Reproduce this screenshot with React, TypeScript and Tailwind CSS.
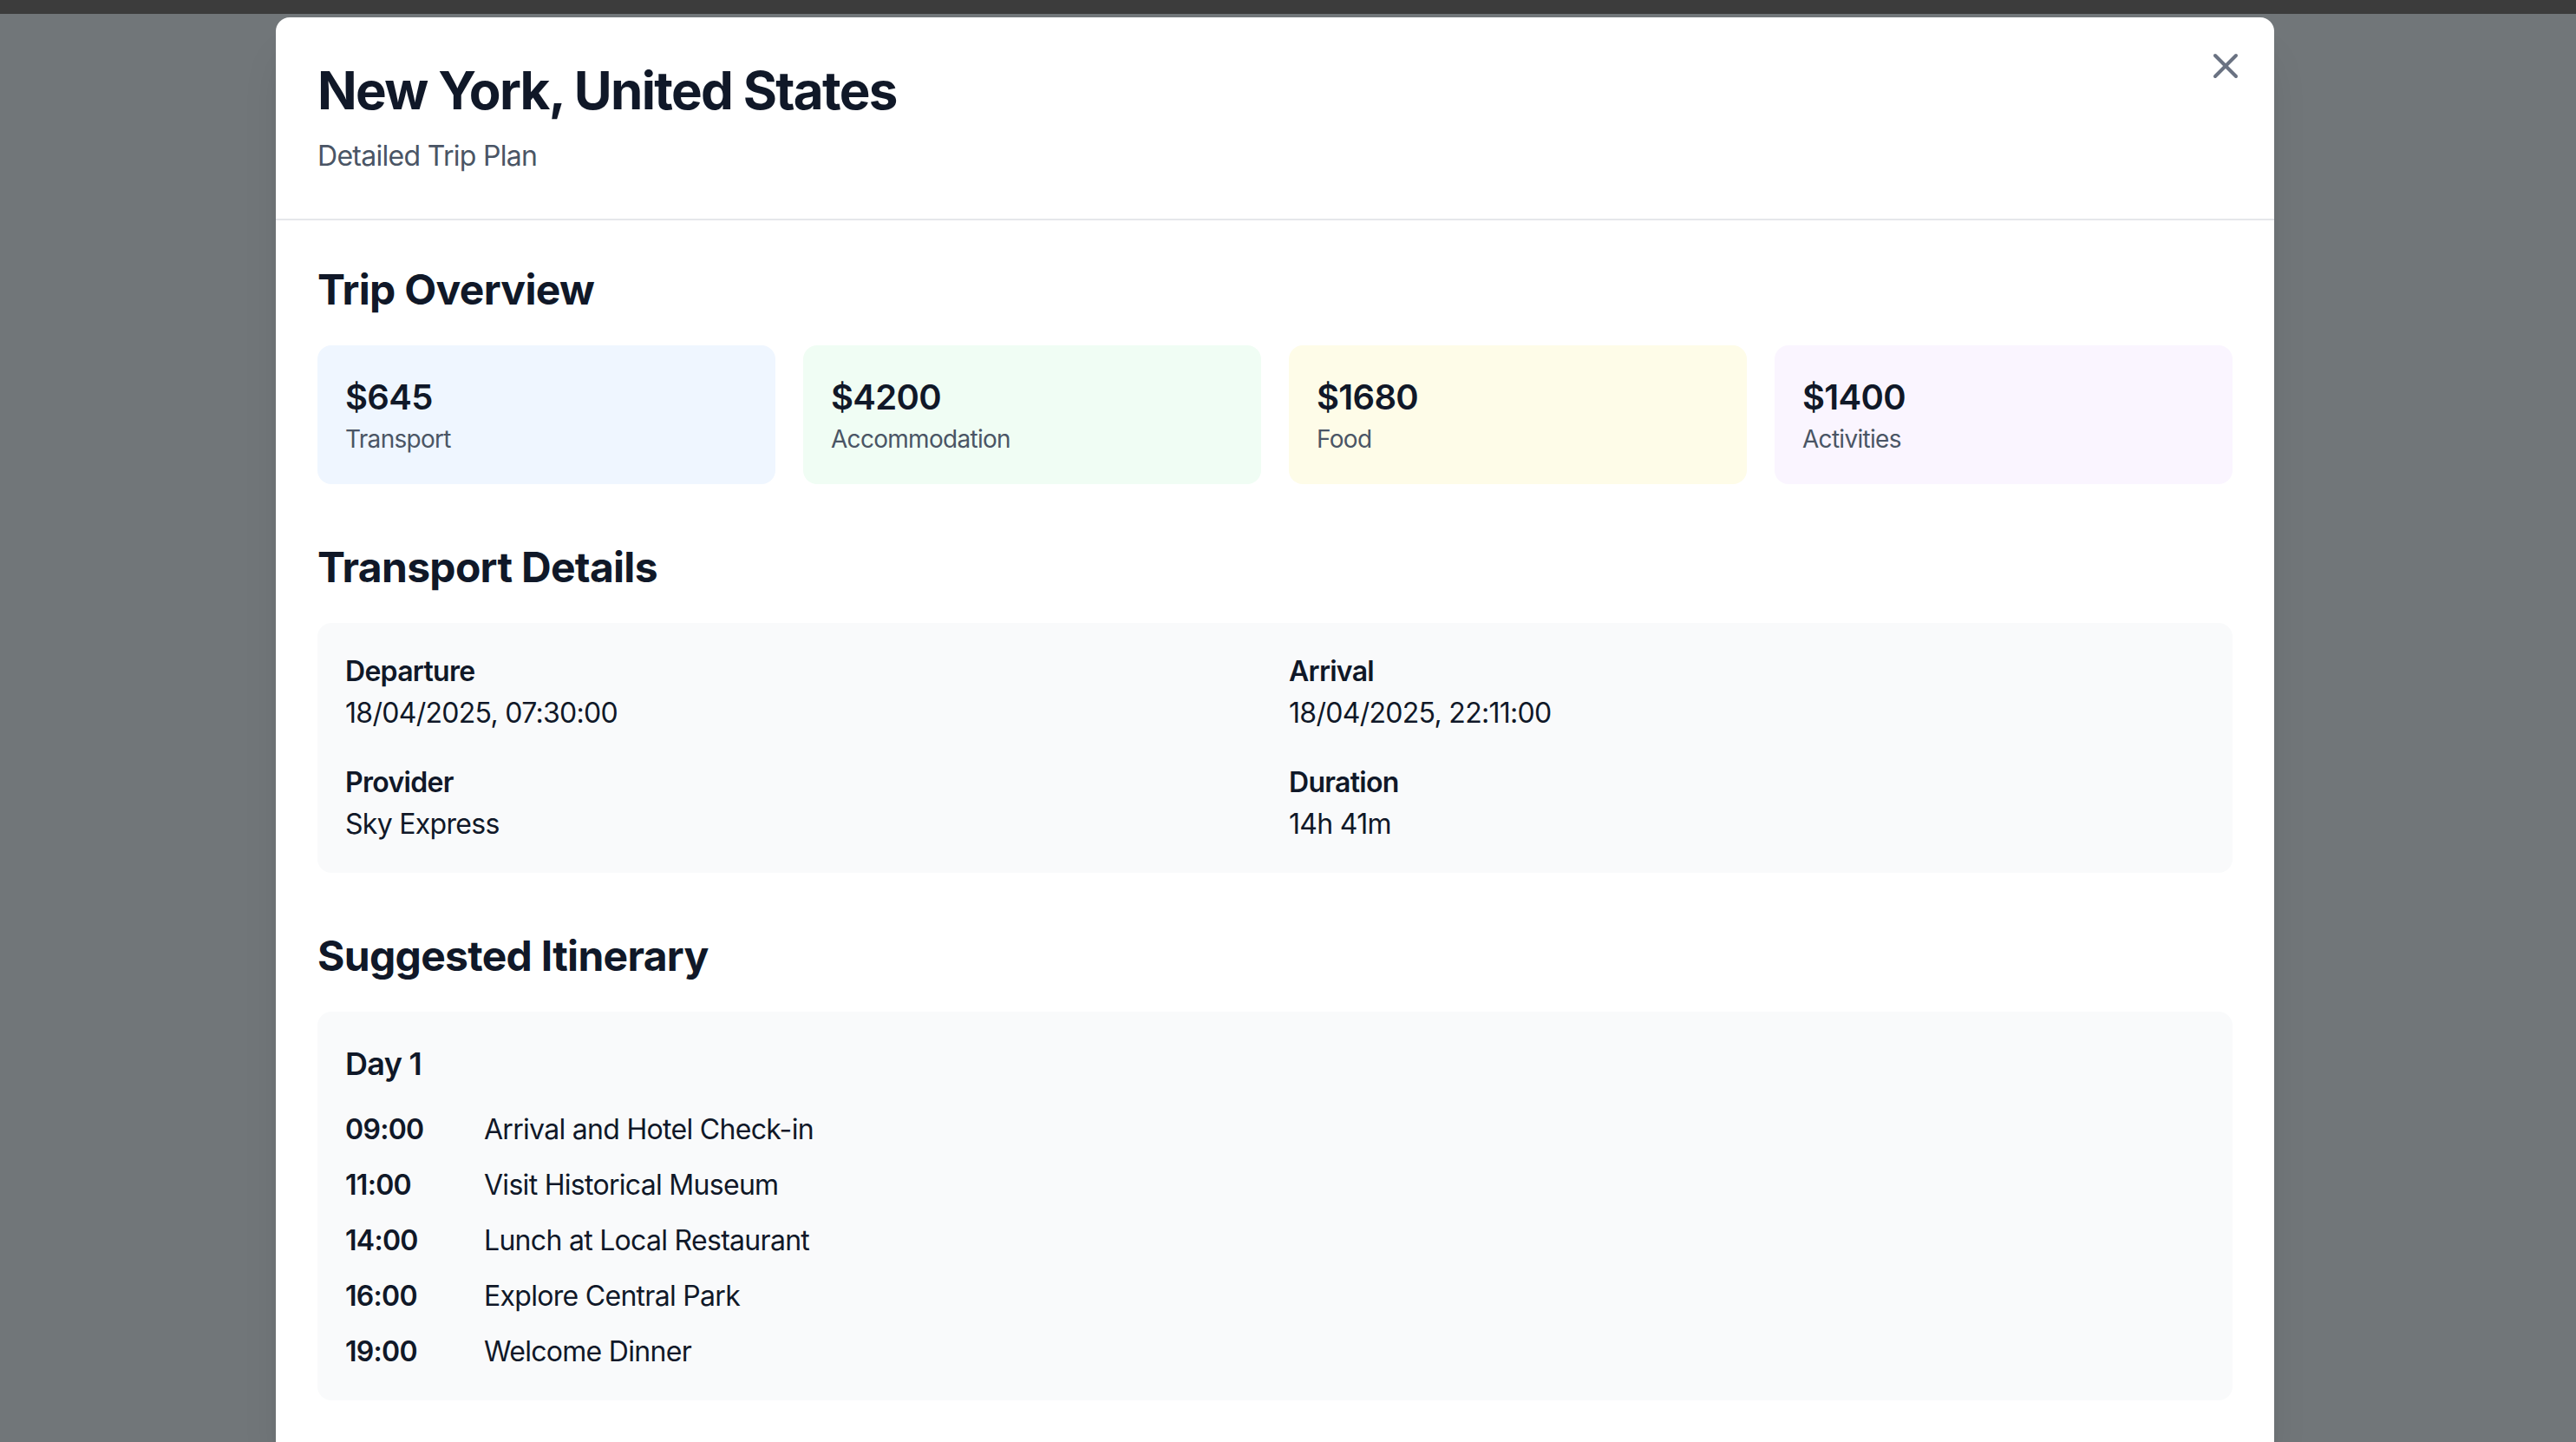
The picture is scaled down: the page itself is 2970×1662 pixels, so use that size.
import { X } from 'lucide-react';

const costs = [
  { amount: '$645', label: 'Transport', bg: 'bg-blue-50' },
  { amount: '$4200', label: 'Accommodation', bg: 'bg-green-50' },
  { amount: '$1680', label: 'Food', bg: 'bg-yellow-50' },
  { amount: '$1400', label: 'Activities', bg: 'bg-purple-50' },
];

const transport = [
  { label: 'Departure', value: '18/04/2025, 07:30:00' },
  { label: 'Arrival', value: '18/04/2025, 22:11:00' },
  { label: 'Provider', value: 'Sky Express' },
  { label: 'Duration', value: '14h 41m' },
];

const dayOne = [
  { time: '09:00', activity: 'Arrival and Hotel Check-in' },
  { time: '11:00', activity: 'Visit Historical Museum' },
  { time: '14:00', activity: 'Lunch at Local Restaurant' },
  { time: '16:00', activity: 'Explore Central Park' },
  { time: '19:00', activity: 'Welcome Dinner' },
];

function SectionTitle({ children }: { children: React.ReactNode }) {
  return <h3 className="text-2xl font-bold text-gray-900 mb-4">{children}</h3>;
}

export default function App() {
  return (
    // the original was taken at 2x, so the whole page is zoomed
    <div className="[zoom:2] h-[831px] overflow-hidden bg-[#717679] font-['Inter',sans-serif] tracking-[-0.022em]">
      <div className="h-2 bg-[#3c3c3c]" />

      <div className="flex justify-center pr-[15px] pt-[2px]">
        <div className="w-[1152px] bg-white rounded-t-lg shadow-xl">
          {/* Header */}
          <div className="relative p-6 border-b border-gray-200">
            <h2 className="text-3xl font-bold text-gray-900 tracking-[-0.028em]">New York, United States</h2>
            <p className="mt-2 text-gray-600">Detailed Trip Plan</p>
            <button type="button" className="absolute top-4 right-4 text-gray-500 hover:text-gray-700">
              <X className="w-6 h-6" strokeWidth={2} />
            </button>
          </div>

          {/* Body */}
          <div className="p-6 space-y-8">
            <section>
              <SectionTitle>Trip Overview</SectionTitle>
              <div className="grid grid-cols-4 gap-4">
                {costs.map((c) => (
                  <div key={c.label} className={`${c.bg} rounded-lg p-4`}>
                    <p className="text-xl font-semibold text-gray-900">{c.amount}</p>
                    <p className="text-sm text-gray-600">{c.label}</p>
                  </div>
                ))}
              </div>
            </section>

            <section>
              <SectionTitle>Transport Details</SectionTitle>
              <div className="bg-gray-50 rounded-lg p-4 grid grid-cols-2 gap-4">
                {transport.map((t) => (
                  <div key={t.label}>
                    <p className="font-semibold text-gray-900">{t.label}</p>
                    <p className="text-gray-900">{t.value}</p>
                  </div>
                ))}
              </div>
            </section>

            <section>
              <SectionTitle>Suggested Itinerary</SectionTitle>
              <div className="bg-gray-50 rounded-lg p-4">
                <h4 className="text-lg font-semibold text-gray-900 mb-3">Day 1</h4>
                <div className="space-y-2">
                  {dayOne.map((item) => (
                    <div key={item.time} className="flex">
                      <span className="w-20 font-semibold text-gray-900">{item.time}</span>
                      <span className="text-gray-900">{item.activity}</span>
                    </div>
                  ))}
                </div>
              </div>
            </section>
          </div>
        </div>
      </div>
    </div>
  );
}
